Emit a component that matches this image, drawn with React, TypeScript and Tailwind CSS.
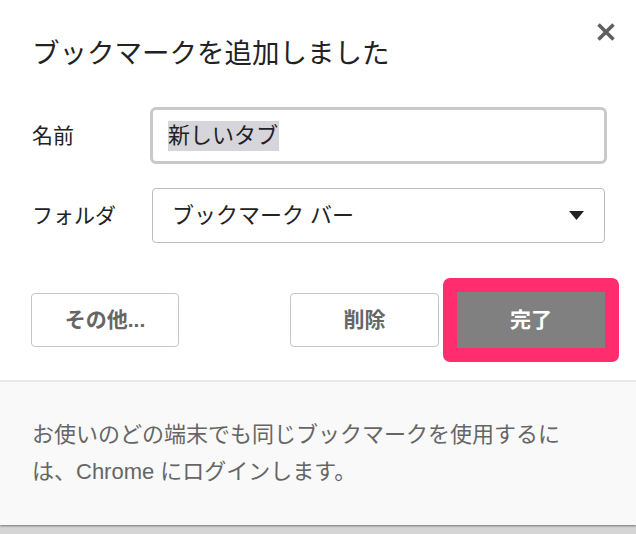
import React from "react";

const FONT = { fontFamily: '"Liberation Sans", "Noto Sans CJK JP", sans-serif' };

export default function App() {
  return (
    <div className="w-[636px] h-[534px] bg-[#d5d5d5] overflow-hidden" style={FONT}>
      <div className="relative w-[636px] h-[525px] bg-white flex flex-col shadow-[0_1px_2px_rgba(0,0,0,0.45)]">
        <button className="absolute top-[22px] right-[20px] w-[20px] h-[20px] flex items-center justify-center">
          <svg width="20" height="20" viewBox="0 0 20 20">
            <path d="M2.5 2.5 L17.5 17.5 M17.5 2.5 L2.5 17.5" stroke="#5f5f5f" strokeWidth="3.6" strokeLinecap="butt" />
          </svg>
        </button>

        <div className="pt-[38px] pl-[32px] text-[27.5px] leading-[32px] text-[#222]">
          ブックマークを追加しました
        </div>

        <div className="mt-[37px] flex items-center pl-[32px] pr-[29px]">
          <div className="w-[118px] text-[21px] leading-[28px] text-[#222]">名前</div>
          <div className="flex-1 h-[57px] border-[3px] border-[#c9c9c9] rounded-[6px] flex items-center pl-[15px]">
            <span className="bg-[#d5d5db] text-[22px] leading-[30px] text-[#222] pr-[1px]">新しいタブ</span>
          </div>
        </div>

        <div className="mt-[24px] flex items-center pl-[32px] pr-[31px]">
          <div className="w-[120px] text-[21px] leading-[28px] text-[#222]">フォルダ</div>
          <div className="flex-1 h-[55px] border border-[#bdbdbd] rounded-[4px] flex items-center pl-[19px] pr-[20px]">
            <span className="flex-1 text-[22px] leading-[30px] text-[#222]">ブックマーク バー</span>
            <svg width="15" height="9" viewBox="0 0 15 9">
              <path d="M0 0 L15 0 L7.5 9 Z" fill="#222" />
            </svg>
          </div>
        </div>

        <div className="mt-[35px] flex items-center pl-[31px] pr-[17px]">
          <button className="w-[148px] h-[54px] border border-[#c6c6c6] rounded-[4px] bg-white text-[21px] font-bold text-[#666] flex items-center justify-center">
            その他...
          </button>
          <button className="ml-auto w-[149px] h-[54px] border border-[#c6c6c6] rounded-[4px] bg-white text-[21px] font-bold text-[#666] flex items-center justify-center">
            削除
          </button>
          <div className="ml-[4px] p-[14px] bg-[#ff2d6d] rounded-[7px]">
            <button className="w-[148px] h-[56px] bg-[#808080] text-[21px] font-bold text-white flex items-center justify-center">
              完了
            </button>
          </div>
        </div>

        <div className="mt-[18px] flex-1 bg-[#f9f9f9] border-t-2 border-[#e9e9e9] pt-[34px] pl-[32px] pr-[40px] text-[22px] leading-[37px] text-[#666]">
          お使いのどの端末でも同じブックマークを使用するに
          <br />
          は、Chrome にログインします。
        </div>
      </div>
    </div>
  );
}
